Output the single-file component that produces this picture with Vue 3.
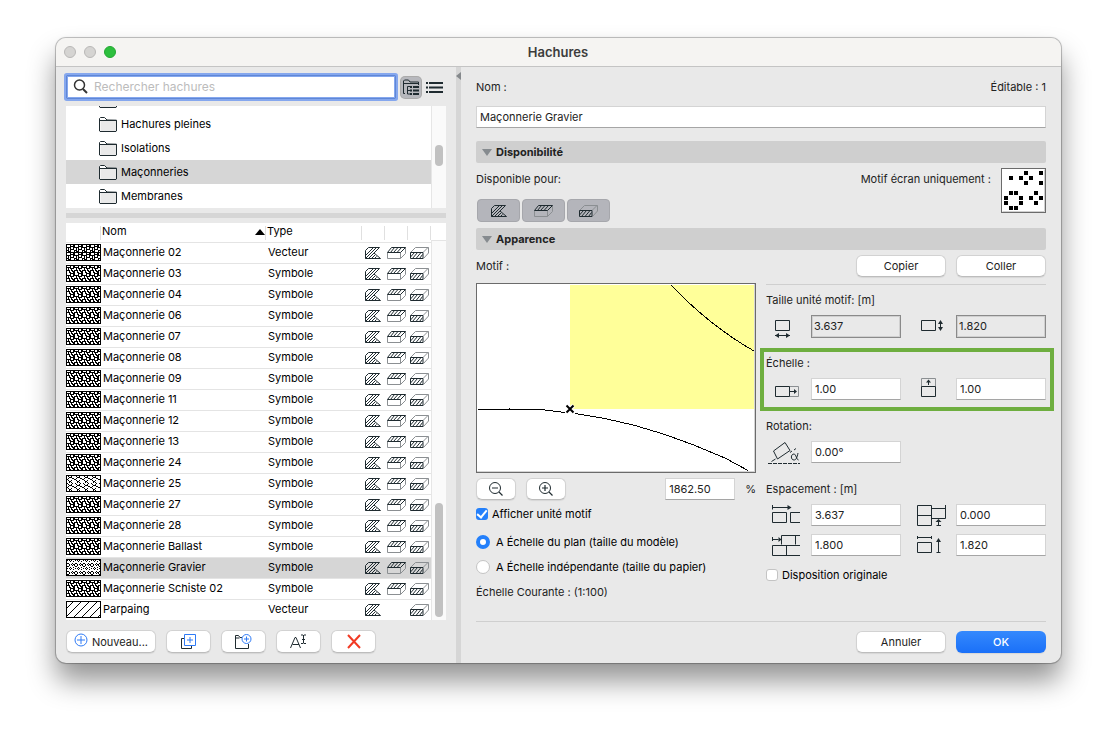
<script setup>
import { ref } from 'vue'

const folders = ['', 'Hachures pleines', 'Isolations', 'Maçonneries', 'Membranes']
const activeFolder = ref('Maçonneries')

const s = 'Symbole'
const hatches = [
  { name: 'Maçonnerie 02', type: 'Vecteur', fill: 'brick', uses: [1, 1, 1] },
  { name: 'Maçonnerie 03', type: s, fill: 'stone', uses: [1, 1, 1] },
  { name: 'Maçonnerie 04', type: s, fill: 'stone', uses: [1, 1, 1] },
  { name: 'Maçonnerie 06', type: s, fill: 'stone', uses: [1, 1, 1] },
  { name: 'Maçonnerie 07', type: s, fill: 'stone', uses: [1, 1, 1] },
  { name: 'Maçonnerie 08', type: s, fill: 'stone', uses: [1, 1, 1] },
  { name: 'Maçonnerie 09', type: s, fill: 'stone', uses: [1, 1, 1] },
  { name: 'Maçonnerie 11', type: s, fill: 'stone', uses: [1, 1, 1] },
  { name: 'Maçonnerie 12', type: s, fill: 'stone', uses: [1, 1, 1] },
  { name: 'Maçonnerie 13', type: s, fill: 'stone', uses: [1, 1, 1] },
  { name: 'Maçonnerie 24', type: s, fill: 'stone', uses: [1, 1, 1] },
  { name: 'Maçonnerie 25', type: s, fill: 'crack', uses: [1, 1, 1] },
  { name: 'Maçonnerie 27', type: s, fill: 'stone', uses: [1, 1, 1] },
  { name: 'Maçonnerie 28', type: s, fill: 'stone', uses: [1, 1, 1] },
  { name: 'Maçonnerie Ballast', type: s, fill: 'stone', uses: [1, 1, 1] },
  { name: 'Maçonnerie Gravier', type: s, fill: 'gravel', uses: [1, 1, 1] },
  { name: 'Maçonnerie Schiste 02', type: s, fill: 'stone', uses: [1, 1, 1] },
  { name: 'Parpaing', type: 'Vecteur', fill: 'diagonal', uses: [1, 0, 1] }
]
const selected = ref('Maçonnerie Gravier')
const useIcons = [
  { id: 'i-draft', w: 16, label: 'Dessin' },
  { id: 'i-cover', w: 19, label: 'Surface' },
  { id: 'i-cut', w: 19, label: 'Coupe' }
]

// 8×8 screen bitmaps, one string per pixel row
const bitmaps = {
  brick: ['########', '#...#..#', '#...####', '#####..#', '..#.#..#', '..#.####', '###.#...', '#.###...'],
  stone: ['#...####', '#...#..#', '#####..#', '..#.####', '..#..#..', '####.##.', '#..#..##', '#..##..#'],
  crack: ['.#....#.', '..#..#..', '...###..', '..#...##', '##......', '..#..#..', '...##...', '...#.#..'],
  gravel: ['....#..#', '.#.#.#..', '....#..#', '........', '.##...#.', '#..#.#.#', '#..#..#.', '.##.....'],
  diagonal: ['.......#', '......#.', '.....#..', '....#...', '...#....', '..#.....', '.#......', '#.......']
}
const dots = (rows, d) =>
  rows.map((r, y) => [...r].map((c, x) => (c === '#' ? `M${x} ${y}h${d}v${d}h-${d}z` : '')).join('')).join('')

const search = ref('')
const name = ref('Maçonnerie Gravier')
const zoom = ref('1862.50')
const showUnit = ref(true)
const original = ref(false)
const scaleMode = ref('plan')

const groups = ref([
  {
    title: 'Taille unité motif: [m]', readonly: true,
    fields: [{ label: 'Largeur unité', icon: 'i-width', value: '3.637' }, { label: 'Hauteur unité', icon: 'i-height', value: '1.820' }]
  },
  {
    title: 'Échelle :', highlight: true,
    fields: [{ label: 'Échelle horizontale', icon: 'i-scalex', value: '1.00' }, { label: 'Échelle verticale', icon: 'i-scaley', value: '1.00' }]
  },
  {
    title: 'Rotation:',
    fields: [{ label: 'Angle', icon: 'i-angle', value: '0.00°' }]
  },
  {
    title: 'Espacement : [m]',
    fields: [
      { label: 'Pas horizontal', icon: 'i-stepx', value: '3.637' }, { label: 'Décalage vertical', icon: 'i-shifty', value: '0.000' },
      { label: 'Décalage horizontal', icon: 'i-shiftx', value: '1.800' }, { label: 'Pas vertical', icon: 'i-stepy', value: '1.820' }
    ]
  }
])
</script>

<template>
  <svg class="sprite" aria-hidden="true">
    <defs>
      <pattern v-for="(rows, id) in bitmaps" :id="'p-' + id" :key="id" width="8" height="8" patternUnits="userSpaceOnUse">
        <path :d="dots(rows, 1)" fill="#000" shape-rendering="crispEdges" />
      </pattern>
    </defs>
    <symbol id="i-draft" viewBox="0 0 16 12">
      <path d="M.5 11.500v-8l3-3h11L9 6l6.500 5.500z" fill="none" stroke="#1f2b30" />
      <path d="M.5 8.500l8-8 M.5 11.500l11-11 M3.500 11.500L9 6 M6.500 11.500L10 8 M9.500 11.500l2-2" fill="none" stroke="#1f2b30" />
    </symbol>
    <symbol id="i-cover" viewBox="0 0 19 12">
      <path d="M.5 5.500v6h13l5-5v-6 M13.500 5.500v6" fill="none" stroke="#8b8f92" />
      <path d="M.5 5.500l4-5h14l-5 5z M3.500 5.500l4-5 M6.500 5.500l4.500-5 M10 5.500l4.500-5" fill="none" stroke="#1f2b30" />
    </symbol>
    <symbol id="i-cut" viewBox="0 0 19 12">
      <path d="M.5 5.500l5-5h13v5.500l-5 5.500 M13 5.500l5-5" fill="none" stroke="#8b8f92" />
      <path d="M.5 5.500h12.500v6H.5z M.5 10l4-4.500 M2.500 11.500l5-6 M6 11.500l5-6 M9.500 11.500l3-4" fill="none" stroke="#1f2b30" />
    </symbol>
    <symbol id="i-folder" viewBox="0 0 18 15">
      <path d="M.5 14V1.500L1.500.5h4L8 3l9.500.2V14l-.5.500H1z" fill="#fff" stroke="#1f2b30" />
      <path d="M1 3.500h5.500M6 3.500h11.500" fill="none" stroke="#1f2b30" />
      <path d="M1.500 4h15.500v10h-15.500z" fill="#e9e9e9" />
    </symbol>
    <symbol id="i-width" viewBox="0 0 30 24">
      <path d="M5.500 5.500h14v10h-14z M5 20.500h15" fill="none" stroke="#1f2b30" />
      <path d="M5 20.500l4-2.500v5z M20 20.500l-4-2.500v5z" fill="#1f2b30" />
    </symbol>
    <symbol id="i-height" viewBox="0 0 30 24">
      <path d="M6.500 5.500h14v10h-14z M25.500 6v9" fill="none" stroke="#1f2b30" />
      <path d="M25.500 5l-2.500 4h5z M25.500 16l-2.500-4h5z" fill="#1f2b30" />
    </symbol>
    <symbol id="i-scalex" viewBox="0 0 30 24">
      <path d="M19.500 8.500h9v10h-9" fill="none" stroke="#8b8f92" />
      <path d="M5.500 8.500h14v10h-14z M20 13.500h5" fill="none" stroke="#1f2b30" />
      <path d="M27 13.500l-3-2.500v5z" fill="#1f2b30" />
    </symbol>
    <symbol id="i-scaley" viewBox="0 0 30 24">
      <path d="M6.500 8.500v-8h14v8" fill="none" stroke="#8b8f92" />
      <path d="M6.500 8.500h14v10h-14z M13.500 3v4" fill="none" stroke="#1f2b30" />
      <path d="M13.500 1.500l-2.500 3h5z" fill="#1f2b30" />
    </symbol>
    <symbol id="i-angle" viewBox="2 0 32 24">
      <path d="M5.500 10L17 1.500l5 8L9.500 18z" fill="none" stroke="#1f2b30" />
      <path d="M22 11.500l2-1.500 M26 9l2-1.500 M3.500 20.500l4-2.500" fill="none" stroke="#1f2b30" />
      <path d="M0 22.500h32" fill="none" stroke="#1f2b30" stroke-dasharray="4 1" />
      <path d="M30 12c-1 5-2 7-4 7-3.500 0-3.500-6 0-6 2 0 2.500 6 4.500 6" fill="none" stroke="#1f2b30" />
    </symbol>
    <symbol id="i-stepx" viewBox="0 0 30 24">
      <path d="M2.500 1v4.500 M2.500 3.500h17 M2.500 8.500h14v10h-14z M30 8.500h-9.500v10H30" fill="none" stroke="#1f2b30" />
      <path d="M21.500 3.500l-4-2.500v5z" fill="#1f2b30" />
    </symbol>
    <symbol id="i-shifty" viewBox="0 0 30 24">
      <path d="M2.500 1.500h14v20h-14z M2.500 11.500h14 M16.500 4.500h14 M30.500 1v13.500h-14 M23.500 17v4.500 M21.500 21.500h4.500" fill="none" stroke="#1f2b30" />
      <path d="M23.500 15l-3 3h6z" fill="#1f2b30" />
    </symbol>
    <symbol id="i-shiftx" viewBox="0 0 30 24">
      <path d="M2.500 3v4 M2.500 5.500h6 M30 1.500H11.500v9 M25.500 1.500v9 M30 11.500H2.500v10H30 M16.500 11.500v10" fill="none" stroke="#1f2b30" />
      <path d="M11.500 5.500l-3-2.500v5z" fill="#1f2b30" />
    </symbol>
    <symbol id="i-stepy" viewBox="0 0 30 24">
      <path d="M2.500 2v3 M16.500 2v3 M2.500 3.500h14 M2.500 8.500h14v10h-14z M23.500 6v12.500 M21.500 18.500h4" fill="none" stroke="#1f2b30" />
      <path d="M23.500 4l-2.500 4h5z" fill="#1f2b30" />
    </symbol>
  </svg>

  <main class="desktop">
    <section class="window" aria-labelledby="win-title">
      <header class="titlebar">
        <div class="lights">
          <button class="light" aria-label="Fermer"></button>
          <button class="light" aria-label="Réduire"></button>
          <button class="light green" aria-label="Agrandir"></button>
        </div>
        <h1 id="win-title">Hachures</h1>
      </header>

      <div class="body">
        <aside class="left">
          <div class="searchrow">
            <label class="search">
              <svg width="16" height="16" viewBox="0 0 16 16" aria-hidden="true">
                <circle cx="6.500" cy="6" r="5" fill="none" stroke="#333" stroke-width="1.500" />
                <path d="M10 10l4 4" stroke="#333" stroke-width="2" />
              </svg>
              <input v-model="search" type="text" placeholder="Rechercher hachures" aria-label="Rechercher hachures" />
            </label>
            <button class="view on" aria-label="Vue par dossiers">
              <svg width="18" height="17" viewBox="0 0 18 17" aria-hidden="true">
                <path d="M3 14.500H1.500V2L2.500 1h4L8 3h8.500v3 M1.500 4.500h15" fill="none" stroke="#1f2b30" />
                <path d="M8 7.500H5.500v7.500H8 M5.500 11.500H8" fill="none" stroke="#1f2b30" />
                <path d="M8 8h2 M11 8h6 M8 11.500h2 M11 11.500h6 M8 15h2 M11 15h6" stroke="#1f2b30" stroke-width="2" />
              </svg>
            </button>
            <button class="view" aria-label="Vue en liste">
              <svg width="17" height="11" viewBox="0 0 17 11" aria-hidden="true">
                <path d="M0 1h2 M3 1h14 M0 5.500h2 M3 5.500h14 M0 10h2 M3 10h14" stroke="#1f2b30" stroke-width="1.800" />
              </svg>
            </button>
          </div>

          <div class="tree">
            <ul>
              <li v-for="f in folders" :key="f" :class="{ active: f === activeFolder }">
                <button :aria-label="f || 'Dossier précédent'" @click="activeFolder = f">
                  <svg width="18" height="15" aria-hidden="true"><use href="#i-folder" /></svg>
                  <span>{{ f }}</span>
                </button>
              </li>
            </ul>
            <div class="track"><div class="thumb small"></div></div>
          </div>
          <div class="splitter"></div>

          <div class="list">
            <table>
              <colgroup>
                <col class="c-swatch" /><col class="c-name" /><col /><col class="c-use" /><col class="c-use" /><col class="c-use" />
              </colgroup>
              <thead>
                <tr>
                  <th><i></i></th>
                  <th>Nom<i></i><span class="sort"></span></th>
                  <th>Type<i></i></th>
                  <th><i></i></th><th><i></i></th><th><i></i></th>
                </tr>
              </thead>
              <tbody>
                <tr v-for="h in hatches" :key="h.name" :class="{ sel: h.name === selected }" @click="selected = h.name">
                  <td class="swatch">
                    <svg width="35" height="17" aria-hidden="true">
                      <rect x=".5" y=".5" width="34" height="16" fill="#fff" stroke="#000" />
                      <rect x="1" y="1" width="33" height="15" :fill="`url(#p-${h.fill})`" />
                    </svg>
                  </td>
                  <td class="name">{{ h.name }}</td>
                  <td class="name">{{ h.type }}</td>
                  <td v-for="(u, i) in useIcons" :key="u.id" class="use">
                    <svg v-if="h.uses[i]" :width="u.w" height="12" role="img" :aria-label="u.label"><use :href="'#' + u.id" /></svg>
                  </td>
                </tr>
              </tbody>
            </table>
            <div class="track list-track"><div class="thumb tall"></div></div>
          </div>

          <div class="tools">
            <button class="btn new">
              <svg width="14" height="14" viewBox="0 0 14 14" aria-hidden="true">
                <path d="M7 3v8M3 7h8" stroke="#2f7bf6" /><circle cx="7" cy="7" r="6" fill="none" stroke="#2f7bf6" />
              </svg>
              Nouveau...
            </button>
            <button class="btn" aria-label="Dupliquer">
              <svg width="15" height="15" viewBox="0 0 15 15" aria-hidden="true">
                <path d="M3 4.500H.5v10h10V12" fill="none" stroke="#1f2b30" />
                <path d="M3.500.5h11v11h-11z M9 3v6 M6 6h6" fill="none" stroke="#2f7bf6" />
              </svg>
            </button>
            <button class="btn" aria-label="Nouveau dossier">
              <svg width="17" height="15" viewBox="0 0 17 15" aria-hidden="true">
                <path d="M7 3.500H5L3.500 1.500h-3v13h13V10 M.5 4h4" fill="none" stroke="#1f2b30" />
                <circle cx="11.500" cy="5" r="4.500" fill="#fff" stroke="#2f7bf6" /><path d="M11.500 2.500v5 M9 5h5" stroke="#2f7bf6" />
              </svg>
            </button>
            <button class="btn" aria-label="Renommer">
              <svg width="17" height="15" viewBox="0 0 17 15" aria-hidden="true">
                <path d="M.5 14L5 3.500h1L10.500 14 M2.500 10.500h6.500" fill="none" stroke="#1f2b30" />
                <path d="M11 1h2l.5.500.500-.5h2 M13.500 1v8 M11 9.500h2l.5-.5.500.5h2 M12 5.500h3" fill="none" stroke="#1f2b30" />
              </svg>
            </button>
            <button class="btn" aria-label="Supprimer">
              <svg width="14" height="15" viewBox="0 0 14 15" aria-hidden="true">
                <path d="M1 1l12 13M13 1L1 14" stroke="#f23a24" stroke-width="2" />
              </svg>
            </button>
          </div>
        </aside>

        <div class="divider"><button class="collapse" aria-label="Masquer la liste"></button></div>

        <form class="right" @submit.prevent>
          <div class="headline">
            <label for="hatch-name">Nom :</label>
            <span>Éditable : 1</span>
          </div>
          <input id="hatch-name" v-model="name" class="field" type="text" />

          <h2 class="section"><button type="button">Disponibilité</button></h2>
          <div class="avail">
            <div>
              <p>Disponible pour:</p>
              <div class="toggles">
                <button v-for="u in useIcons" :key="u.id" type="button" aria-pressed="true" :aria-label="u.label">
                  <svg :width="u.w" height="12" aria-hidden="true"><use :href="'#' + u.id" /></svg>
                </button>
              </div>
            </div>
            <div class="screen">
              <p>Motif écran uniquement :</p>
              <svg width="45" height="45" viewBox="0 0 45 45" role="img" aria-label="Motif écran">
                <rect x=".5" y=".5" width="44" height="44" fill="#fff" stroke="#6b6b6b" />
                <path d="M1.500 43.500h42v-42" fill="none" stroke="#d0d0d0" />
                <path :d="dots(bitmaps.gravel, 0.8)" transform="translate(3 3) scale(5)" shape-rendering="crispEdges" />
              </svg>
            </div>
          </div>

          <h2 class="section"><button type="button">Apparence</button></h2>
          <div class="motif">
            <p>Motif :</p>
            <button type="button" class="btn wide">Copier</button>
            <button type="button" class="btn wide">Coller</button>
          </div>

          <div class="columns">
            <div class="preview-col">
              <svg class="preview" viewBox="0 0 278 188" preserveAspectRatio="xMidYMid slice" role="img" aria-label="Aperçu du motif">
                <g shape-rendering="crispEdges">
                  <rect width="278" height="188" fill="#fff" />
                  <rect x="93" y="1" width="184" height="124" fill="#ffff99" />
                  <path d="M277.500 0v187.500H0" fill="none" stroke="#d4d4d4" />
                  <path d="M194 1Q233 42 277 67" fill="none" stroke="#000" />
                  <polyline points="1,125.500 64,125.500 88,128.500" fill="none" stroke="#000" />
                  <path d="M32 124h1v1h-1z" />
                  <polyline points="98,129.500 128,134.500 158,141.500 188,150.500 218,161.500 248,174 271,186.500" fill="none" stroke="#000" />
                </g>
                <path d="M89.500 121.500l7 7m0-7l-7 7" stroke="#fff" stroke-width="4" />
                <path d="M89.500 121.500l7 7m0-7l-7 7" stroke="#000" stroke-width="2" />
              </svg>
              <div class="zoomrow">
                <button type="button" class="btn mag" aria-label="Zoom arrière">
                  <svg width="14" height="14" viewBox="0 0 14 14" aria-hidden="true">
                    <circle cx="6" cy="6" r="5.500" fill="none" stroke="#1f2b30" /><path d="M3 6h6 M10 10l3.500 3.500" stroke="#1f2b30" stroke-width="1.200" />
                  </svg>
                </button>
                <button type="button" class="btn mag" aria-label="Zoom avant">
                  <svg width="14" height="14" viewBox="0 0 14 14" aria-hidden="true">
                    <circle cx="6" cy="6" r="5.500" fill="none" stroke="#1f2b30" /><path d="M3 6h6 M6 3v6 M10 10l3.500 3.500" stroke="#1f2b30" stroke-width="1.200" />
                  </svg>
                </button>
                <input id="zoom" v-model="zoom" class="field" type="text" />
                <label for="zoom">%</label>
              </div>
              <label class="check"><input v-model="showUnit" type="checkbox" />Afficher unité motif</label>
              <label class="radio first"><input v-model="scaleMode" type="radio" value="plan" />A Échelle du plan (taille du modèle)</label>
              <label class="radio"><input v-model="scaleMode" type="radio" value="paper" />A Échelle indépendante (taille du papier)</label>
              <p class="current">Échelle Courante : (1:100)</p>
            </div>

            <div class="params">
              <fieldset v-for="g in groups" :key="g.title" :class="{ highlight: g.highlight }">
                <legend>{{ g.title }}</legend>
                <div class="grid">
                  <label v-for="f in g.fields" :key="f.label" class="param">
                    <svg width="32" height="24" role="img" :aria-label="f.label"><use :href="'#' + f.icon" :width="f.icon === 'i-angle' ? 32 : 30" height="24" /></svg>
                    <input v-model="f.value" class="field" :class="{ locked: g.readonly }" type="text" :readonly="g.readonly" />
                  </label>
                </div>
              </fieldset>
              <label class="check original"><input v-model="original" type="checkbox" />Disposition originale</label>
            </div>
          </div>

          <footer class="footer">
            <button type="button" class="btn wide">Annuler</button>
            <button type="submit" class="btn wide primary">OK</button>
          </footer>
        </form>
      </div>
    </section>
  </main>
</template>

<style>
body {
  background: #fff;
}
</style>

<style scoped>
* {
  box-sizing: border-box;
}
.sprite {
  position: absolute;
  width: 0;
  height: 0;
}
.sprite symbol {
  overflow: visible;
}
.desktop {
  padding: 38px 56px 74px;
  overflow: hidden;
  font: 11px/16px Inter, "Liberation Sans", sans-serif;
  color: #222;
}
button,
input {
  font: inherit;
  color: inherit;
  margin: 0;
}
button {
  padding: 0;
  border: 0;
  background: none;
}
svg {
  display: block;
}
p,
h1,
h2,
ul {
  margin: 0;
  padding: 0;
}
.window {
  border-radius: 10px;
  background: #e9e9e9;
  box-shadow: 0 0 0 1px rgba(0, 0, 0, 0.2), 0 0 3px rgba(0, 0, 0, 0.15), 0 18px 28px rgba(0, 0, 0, 0.42);
}
.titlebar {
  display: grid;
  grid-template-columns: 1fr auto 1fr;
  align-items: center;
  height: 29px;
  padding: 0 9px 0 8px;
  border-bottom: 1px solid #c4c4c4;
  border-radius: 10px 10px 0 0;
  background: #f5f4f2;
}
.titlebar h1 {
  font-size: 13px;
  font-weight: 600;
  color: #3c3c3c;
}
.lights {
  display: flex;
  gap: 8px;
}
.light {
  width: 12px;
  height: 12px;
  border: 1px solid #b9b8b7;
  border-radius: 50%;
  background: #d5d4d2;
}
.light.green {
  border-color: #23a832;
  background: #2dbf3e;
}
.body {
  display: grid;
  grid-template-columns: 400px 5px minmax(0, 1fr);
}
.left {
  padding: 8px 10px 10px;
}
.searchrow {
  display: flex;
  align-items: center;
}
.search {
  display: flex;
  flex: 1;
  align-items: center;
  gap: 5px;
  height: 24px;
  margin-right: 5px;
  padding-left: 6px;
  background: #fff;
  border: 1px solid #5f87d6;
  border-radius: 1px;
  box-shadow: 0 0 0 2px #85a7ee, inset 0 0 0 1px #85a7ee;
}
.search input {
  flex: 1;
  min-width: 0;
  padding: 0;
  border: 0;
  outline: 0;
  background: none;
  font-size: 12px;
}
.search input::placeholder {
  color: #bcbcbc;
}
.view {
  display: grid;
  place-items: center;
  width: 20px;
  height: 21px;
  border-radius: 4px;
}
.view.on {
  margin-right: 4px;
  background: #b7b8bd;
  box-shadow: 0 0 0 1px #aaa;
}
.view:last-child {
  width: 18px;
  margin-right: 3px;
}
.tree {
  display: flex;
  height: 102px;
  margin-top: 7px;
  background: #fff;
}
.tree ul {
  display: flex;
  flex: 1;
  flex-direction: column;
  justify-content: flex-end;
  overflow: hidden;
  list-style: none;
}
.tree li {
  flex: none;
  height: 24px;
}
.tree li.active {
  background: #d6d6d6;
}
.tree button {
  display: flex;
  align-items: center;
  gap: 4px;
  width: 100%;
  height: 24px;
  padding-left: 33px;
  color: #000;
}
.track {
  width: 15px;
  border-left: 1px solid #e6e6e6;
  background: #fafafa;
}
.thumb {
  width: 8px;
  margin-left: 3px;
  border-radius: 4px;
  background: #c1c1c1;
}
.thumb.small {
  height: 21px;
  margin-top: 39px;
}
.splitter {
  height: 5px;
  margin: 5px 0;
  background: #d6d6d6;
}
.list {
  display: flex;
  background: #fff;
  color: #000;
}
.list table {
  flex: 1;
  min-width: 0;
  table-layout: fixed;
  border-collapse: separate;
  border-spacing: 0;
}
.c-swatch {
  width: 35px;
}
.c-name {
  width: 165px;
}
.c-use {
  width: 23px;
}
th {
  position: relative;
  height: 20px;
  padding: 0 1px 2px;
  border-bottom: 1px solid #e4e4e4;
  font-weight: 400;
  line-height: 17px;
  text-align: left;
}
th i {
  position: absolute;
  top: 3px;
  right: 0;
  width: 1px;
  height: 14px;
  background: #e0e0e0;
}
.sort {
  position: absolute;
  top: 6px;
  right: 1px;
  border: 5px solid transparent;
  border-top: 0;
  border-bottom: 6px solid #000;
}
td {
  height: 21px;
  padding: 0;
  border-bottom: 1px solid #e4e4e4;
  line-height: 18px;
  vertical-align: top;
}
.swatch {
  padding-top: 1px;
}
.name {
  padding-left: 2px;
  white-space: nowrap;
}
.use {
  padding: 4px 0 0 2px;
}
.use:nth-child(4) {
  padding-left: 3px;
}
.sel td {
  background: #d6d6d6;
}
tbody tr:last-child td {
  height: 20px;
  border-bottom: 0;
}
.list-track {
  display: flex;
  align-items: flex-end;
  margin-top: 17px;
  border-top: 1px solid #e4e4e4;
}
.thumb.tall {
  height: 114px;
  margin-bottom: 3px;
}
.tools {
  display: flex;
  gap: 10px;
  margin-top: 10px;
}
.btn {
  display: flex;
  align-items: center;
  justify-content: center;
  width: 45px;
  height: 22px;
  border: 1px solid #d2d2d2;
  border-bottom-color: #bdbdbd;
  border-radius: 6px;
  background: #fff;
  box-shadow: 0 1px 1px rgba(0, 0, 0, 0.08);
}
.btn.new {
  gap: 4px;
  width: 90px;
}
.btn.new svg {
  margin-bottom: 3px;
}
.btn.wide {
  width: 90px;
}
.btn.primary {
  border: 0;
  background: linear-gradient(#3589fd, #1a70f8);
  color: #fff;
  font-weight: 500;
}
.tools .btn {
  height: 23px;
}
.divider {
  position: relative;
  background: #d6d6d6;
}
.collapse {
  position: absolute;
  top: 5px;
  left: 0;
  width: 5px;
  height: 8px;
  background: #85898c;
  clip-path: polygon(0 50%, 100% 0, 100% 100%);
}
.right {
  padding: 12px 15px 10px;
}
.headline {
  display: flex;
  justify-content: space-between;
  margin-bottom: 11px;
}
.field {
  display: block;
  width: 100%;
  min-width: 0;
  height: 22px;
  padding: 0 3px;
  border: 1px solid #d4d4d4;
  border-bottom-color: #a5a5a5;
  border-radius: 0;
  outline: 0;
  background: #fff;
}
.section {
  height: 22px;
  border-radius: 2px;
  background: #cfcfcf;
  font-size: 11px;
}
#hatch-name + .section {
  margin-top: 13px;
}
.section button {
  display: flex;
  align-items: center;
  gap: 4px;
  width: 100%;
  height: 22px;
  padding-left: 6px;
  font-weight: 700;
}
.section button::before {
  content: "";
  border: 5px solid transparent;
  border-top: 7px solid #868b8f;
  border-bottom: 0;
}
.avail {
  display: flex;
  justify-content: space-between;
  height: 65px;
  padding-top: 5px;
}
.avail p {
  margin-top: 3px;
}
.toggles {
  display: flex;
  gap: 2px;
  margin: 12px 0 0 1px;
}
.toggles button {
  display: grid;
  place-items: center;
  width: 43px;
  height: 23px;
  border: 1px solid #a6a7ac;
  border-radius: 4px;
  background: #b4b5bb;
}
.screen {
  display: flex;
  gap: 10px;
}
.motif {
  display: flex;
  align-items: center;
  gap: 10px;
  padding: 5px 0 6px;
}
.motif p {
  flex: 1;
}
.columns {
  display: grid;
  grid-template-columns: minmax(0, 1fr) minmax(0, 1fr);
  gap: 10px;
}
.preview {
  width: 100%;
  height: 190px;
  border: 1px solid #6b6b6b;
}
.zoomrow {
  display: flex;
  gap: 10px;
  margin: 5px 0 6px;
}
.btn.mag {
  width: 40px;
}
.zoomrow .field {
  width: 70px;
  margin-left: auto;
}
.zoomrow label {
  line-height: 22px;
}
.check,
.radio {
  display: flex;
  align-items: center;
  height: 16px;
  color: #000;
}
.check input,
.radio input {
  display: grid;
  place-items: center;
  flex: none;
  appearance: none;
  width: 12px;
  height: 12px;
  margin-right: 4px;
  border: 1px solid #c4c4c4;
  border-radius: 3px;
  background: #fff;
}
.check input:checked {
  border: 0;
  background: #2480fb;
}
.check input:checked::after {
  content: "";
  width: 4px;
  height: 8px;
  margin-top: -2px;
  border: solid #fff;
  border-width: 0 2px 2px 0;
  rotate: 40deg;
}
.radio {
  margin-bottom: 9px;
}
.radio.first {
  margin-top: 12px;
}
.radio input {
  width: 14px;
  height: 14px;
  margin-right: 6px;
  border-radius: 50%;
}
.radio input:checked {
  border: 4px solid #2480fb;
}
.params {
  margin-top: 1px;
  padding-top: 7px;
  border-top: 1px solid #cfcfcf;
}
fieldset {
  position: relative;
  min-width: 0;
  margin: 0 0 17px;
  padding: 0;
  border: 0;
}
legend {
  margin-bottom: 7px;
  padding: 0;
}
.grid {
  display: grid;
  grid-template-columns: minmax(0, 1fr) minmax(0, 1fr);
  gap: 7px 10px;
}
.param {
  display: flex;
  align-items: flex-start;
  height: 23px;
}
.param svg {
  flex: none;
  width: 32px;
  margin: 0 9px 0 4px;
  overflow: visible;
}
.param .field {
  flex: 1;
}
.param .locked {
  height: 23px;
  padding: 0 2px 1px;
  border: 1px solid #8a8a8a;
  box-shadow: inset 0 0 0 1px #d0d0d0;
  background: #e9e9e9;
}
.highlight::after {
  content: "";
  position: absolute;
  inset: -30px -8px -10px -6px;
  border: 4px solid #6eae3f;
  pointer-events: none;
}
.original {
  margin-top: -7px;
}
.footer {
  display: flex;
  justify-content: flex-end;
  gap: 10px;
  margin-top: 21px;
  padding-top: 9px;
  border-top: 1px solid #cfcfcf;
}
</style>
